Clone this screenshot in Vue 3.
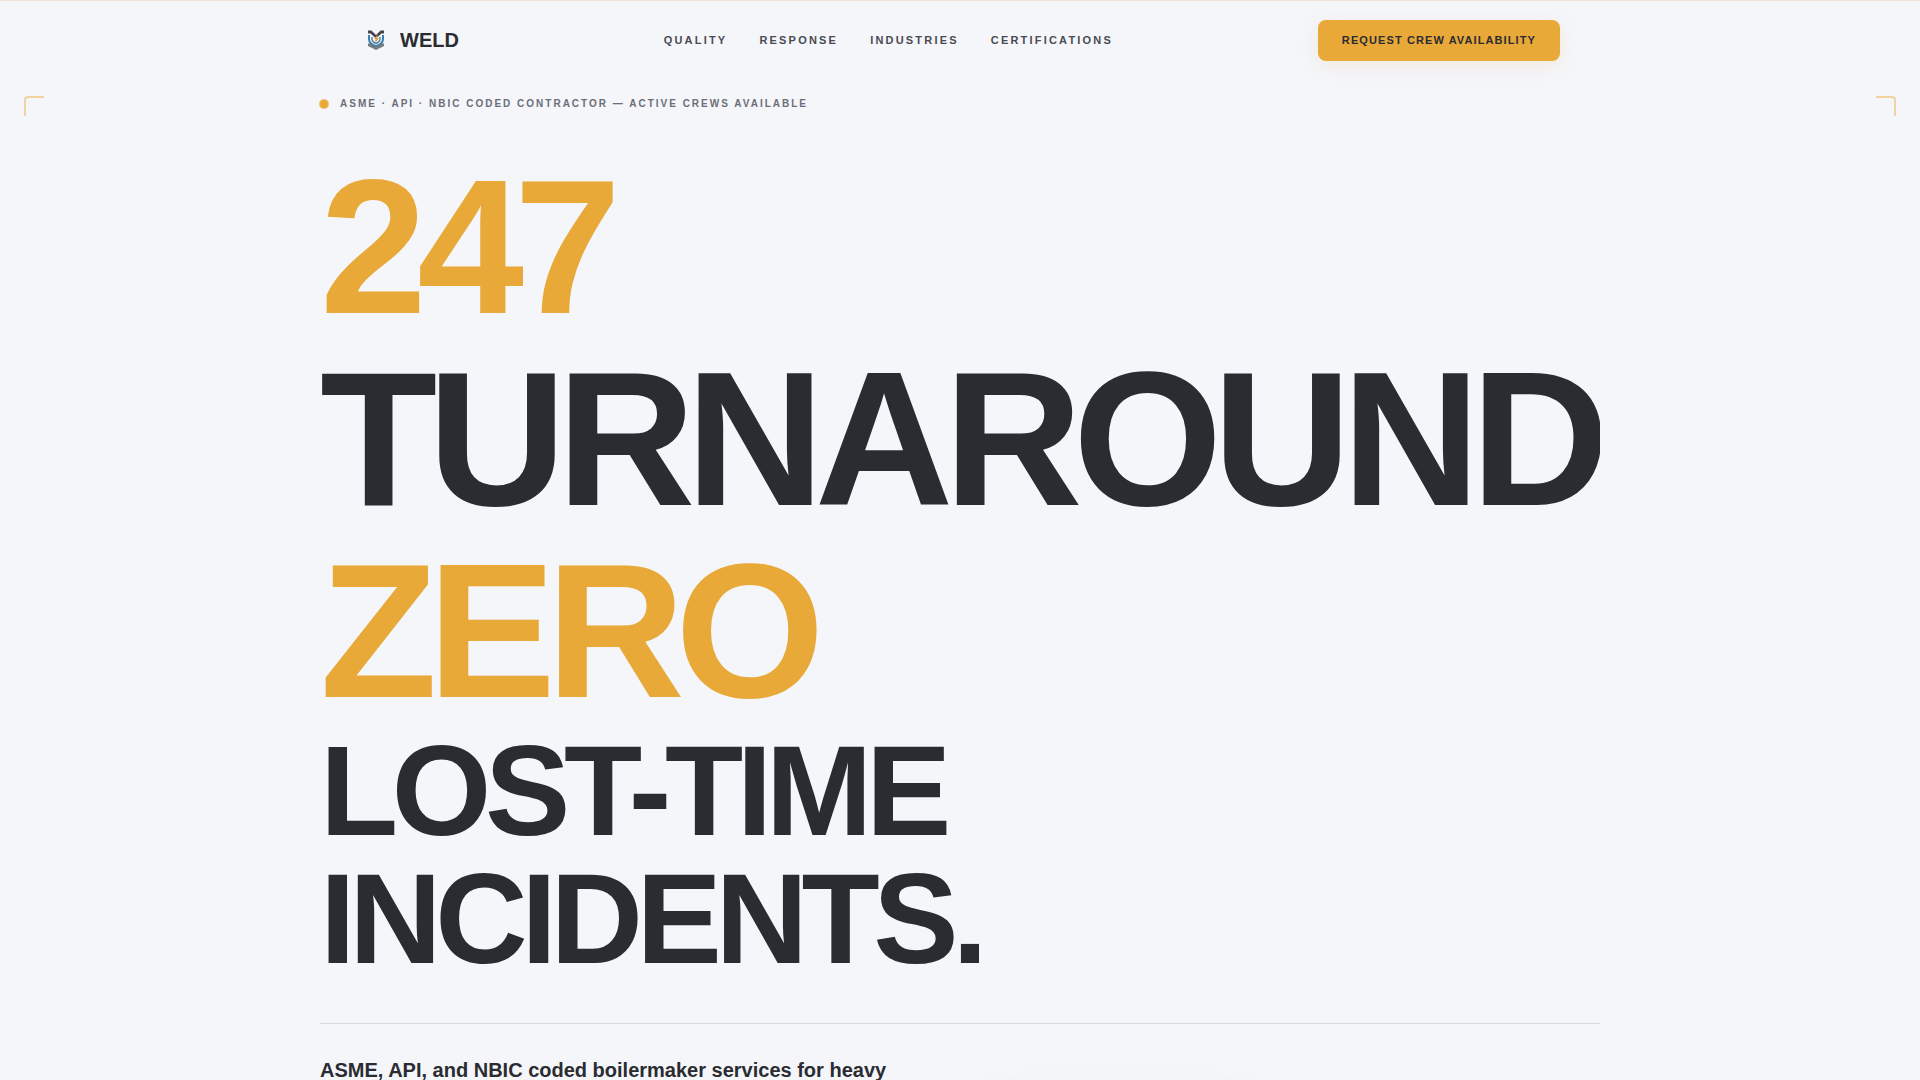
<script setup>
const links = [
  { label: 'Quality', href: '#quality' },
  { label: 'Response', href: '#response' },
  { label: 'Industries', href: '#industries' },
  { label: 'Certifications', href: '#certifications' },
]
</script>

<template>
  <div class="page">
    <header class="nav">
      <a class="brand" href="#">
        <svg class="brand-mark" viewBox="0 0 32 32" aria-hidden="true">
          <g fill="none" stroke="#3b7eae">
            <path d="M9 10v4c0 4 3 5.500 7 7.500 4-2 7-3.500 7-7.500v-4" stroke-width="2" />
            <path d="M12 12v2c0 2.500 1.500 3.500 4 4.500 2.500-1 4-2 4-4.500v-2" stroke-width="1.400" />
          </g>
          <path d="M8 5.500h3.500L16 10l4.500-4.500H24v3h-2.500L16 13.500 10.500 8.500H8z" fill="#45464c" />
          <path d="M8 18.500h2l6 4 6-4h2v2.500l-8 4-8-4z" fill="#77797d" />
          <path d="M18 9.500L14 14h1.500l-.5 4.500 4-5.500h-2z" fill="#f0a536" />
        </svg>
        <span>WELD</span>
      </a>
      <nav class="links" aria-label="Main">
        <a v-for="link in links" :key="link.href" :href="link.href">{{ link.label }}</a>
      </nav>
      <button class="cta" type="button">Request Crew Availability</button>
    </header>

    <main class="hero">
      <span class="corner corner-left"></span>
      <span class="corner corner-right"></span>
      <p class="eyebrow">
        <span class="dot"></span>
        ASME · API · NBIC Coded Contractor — Active Crews Available
      </p>
      <h1 class="headline">
        <span class="big accent">247</span>
        <span class="big">TURNAROUND</span>
        <span class="big accent">ZERO</span>
        <span class="mid">LOST-TIME</span>
        <span class="mid">INCIDENTS.</span>
      </h1>
      <div class="details">
        <p class="lead">ASME, API, and NBIC coded boilermaker services for heavy</p>
        <div class="actions">
          <button class="cta cta-large" type="button">Request Crew Availability</button>
        </div>
      </div>
    </main>
  </div>
</template>

<style>
html {
  scrollbar-width: none;
}
body {
  background: #f4f6fa;
}
</style>

<style scoped>
.page {
  position: relative;
  overflow: hidden;
  font-family: "Liberation Sans", Arial, sans-serif;
  color: #2b2c32;
  background: #f4f6fa;
  border-top: 1px solid #f1e2d2;
}
.nav {
  display: flex;
  align-items: center;
  justify-content: space-between;
  max-width: 1200px;
  height: 79px;
  margin: 0 auto;
}
.brand {
  display: flex;
  align-items: center;
  gap: 8px;
  color: inherit;
  font-size: 20px;
  font-weight: 700;
  text-decoration: none;
}
.brand-mark {
  width: 32px;
  height: 32px;
}
.links {
  display: flex;
  gap: 32px;
}
.links a {
  color: #4a4b52;
  font-size: 11px;
  font-weight: 700;
  line-height: 15px;
  letter-spacing: 0.2em;
  text-decoration: none;
  text-transform: uppercase;
}
.cta {
  padding: 14px 24px;
  border: 0;
  border-radius: 8px;
  color: #2b2c32;
  background: #e8a938;
  box-shadow: 0 4px 20px rgba(232, 169, 56, 0.15);
  font: 700 11px/13px "Liberation Sans", Arial, sans-serif;
  letter-spacing: 0.1em;
  text-transform: uppercase;
}
.hero {
  max-width: 1280px;
  margin: 0 auto;
  padding: 16px 0 64px;
}
.corner {
  position: absolute;
  top: 95px;
  width: 18px;
  height: 18px;
  border: 0 solid #efd3a1;
  border-top-width: 2px;
}
.corner-left {
  left: 24px;
  border-left-width: 2px;
  border-top-left-radius: 4px;
}
.corner-right {
  right: 24px;
  border-right-width: 2px;
  border-top-right-radius: 4px;
}
.eyebrow {
  display: flex;
  align-items: center;
  gap: 12px;
  margin: 0 0 39px;
  color: #6b6e78;
  font-size: 10px;
  font-weight: 700;
  line-height: 16px;
  letter-spacing: 0.2em;
  text-transform: uppercase;
}
.dot {
  width: 8px;
  height: 8px;
  border-radius: 50%;
  background: #e8a938;
  box-shadow: 0 0 0 1px rgba(232, 169, 56, 0.7);
}
.headline {
  margin: 0 0 40px;
  overflow-x: clip;
  font-weight: 700;
}
.headline span {
  display: block;
  letter-spacing: -0.05em;
}
.big {
  font-size: 192px;
  line-height: 192px;
}
.mid {
  font-size: 128px;
  line-height: 128px;
}
.accent {
  color: #e8a938;
}
.details {
  display: grid;
  grid-template-columns: 1fr 1fr;
  gap: 64px;
  padding-top: 32px;
  border-top: 1px solid #d8dae0;
}
.lead {
  margin: 0;
  font-size: 20px;
  font-weight: 700;
  line-height: 28px;
}
.actions {
  padding-top: 32px;
}
.cta-large {
  padding: 20px 32px;
  box-shadow: 0 4px 24px rgba(232, 169, 56, 0.2);
}
</style>
